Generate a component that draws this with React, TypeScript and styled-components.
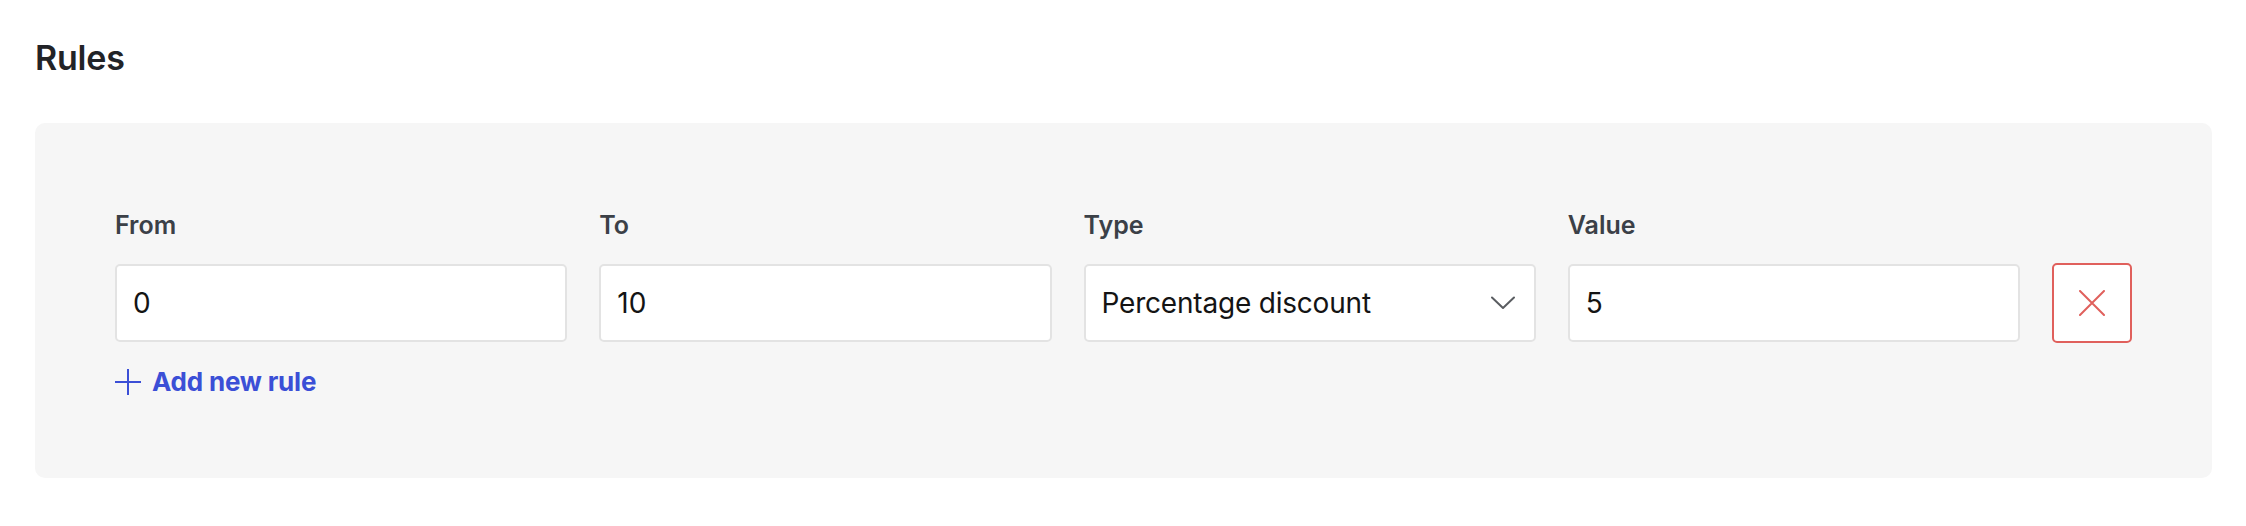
import React from "react";
import styled, { createGlobalStyle } from "styled-components";

const GlobalStyle = createGlobalStyle`
  html, body {
    margin: 0;
    padding: 0;
    background: #ffffff;
    font-family: Inter, "Noto Sans", "Liberation Sans", sans-serif;
  }
  * {
    box-sizing: border-box;
  }
`;

interface Rule {
  from: string;
  to: string;
  type: string;
  value: string;
}

const rules: Rule[] = [
  { from: "0", to: "10", type: "Percentage discount", value: "5" },
];

function App() {
  return (
    <>
      <GlobalStyle />
      <Page>
        <Title>Rules</Title>
        <Panel>
          {rules.map((rule, i) => (
            <RuleRow key={i}>
              <Field>
                <Label>From</Label>
                <TextInput defaultValue={rule.from} />
              </Field>
              <Field>
                <Label>To</Label>
                <TextInput defaultValue={rule.to} />
              </Field>
              <Field>
                <Label>Type</Label>
                <SelectBox type="button">
                  <span>{rule.type}</span>
                  <svg width="24" height="14" viewBox="0 0 24 14" fill="none">
                    <path
                      d="M1 1.5 L12 12 L23 1.5"
                      stroke="#5a5d61"
                      strokeWidth="2"
                      strokeLinecap="round"
                      strokeLinejoin="round"
                    />
                  </svg>
                </SelectBox>
              </Field>
              <Field>
                <Label>Value</Label>
                <TextInput defaultValue={rule.value} />
              </Field>
              <DeleteButton type="button" aria-label="Remove rule">
                <svg width="26" height="26" viewBox="0 0 26 26" fill="none">
                  <path
                    d="M1 1 L25 25 M25 1 L1 25"
                    stroke="#e0605c"
                    strokeWidth="2"
                    strokeLinecap="round"
                  />
                </svg>
              </DeleteButton>
            </RuleRow>
          ))}
          <AddButton type="button">
            <svg width="26" height="26" viewBox="0 0 26 26" fill="none">
              <path d="M13 0 V26 M0 13 H26" stroke="#3b4fd6" strokeWidth="2" />
            </svg>
            Add new rule
          </AddButton>
        </Panel>
      </Page>
    </>
  );
}

const Page = styled.div`
  padding: 37px 34px 40px 35px;
`;

const Title = styled.h2`
  margin: 0 0 45px;
  font-size: 34px;
  line-height: 41px;
  font-weight: 600;
  color: #222327;
  letter-spacing: -0.2px;
`;

const Panel = styled.div`
  background: #f6f6f6;
  border-radius: 10px;
  padding: 86px 80px 80px;
  display: flex;
  flex-direction: column;
  align-items: flex-start;
  gap: 24px;
`;

const RuleRow = styled.div`
  width: 100%;
  display: grid;
  grid-template-columns: repeat(4, 1fr) 80px;
  column-gap: 32px;
  align-items: end;
`;

const Field = styled.div`
  display: flex;
  flex-direction: column;
  gap: 23px;
  min-width: 0;
`;

const Label = styled.label`
  font-size: 25px;
  line-height: 32px;
  font-weight: 600;
  color: #3b4047;
`;

const TextInput = styled.input`
  width: 100%;
  height: 78px;
  border: 2px solid #e3e3e3;
  border-radius: 5px;
  background: #ffffff;
  padding: 0 16px;
  font-family: inherit;
  font-size: 28px;
  color: #141414;
  outline: none;
`;

const SelectBox = styled.button`
  width: 100%;
  height: 78px;
  border: 2px solid #e3e3e3;
  border-radius: 5px;
  background: #ffffff;
  padding: 0 19px 0 16px;
  display: flex;
  align-items: center;
  justify-content: space-between;
  font-family: inherit;
  font-size: 28px;
  letter-spacing: -0.2px;
  color: #141414;
  cursor: pointer;
`;

const DeleteButton = styled.button`
  width: 80px;
  height: 80px;
  border: 2px solid #e0605c;
  border-radius: 5px;
  background: #ffffff;
  display: flex;
  align-items: center;
  justify-content: center;
  padding: 0;
  cursor: pointer;
  margin-bottom: -1px;
`;

const AddButton = styled.button`
  display: flex;
  align-items: center;
  gap: 11px;
  border: none;
  background: none;
  padding: 0;
  font-family: inherit;
  font-size: 26px;
  line-height: 32px;
  font-weight: 700;
  color: #3b4fd6;
  cursor: pointer;
  letter-spacing: -0.2px;
`;

export default App;
